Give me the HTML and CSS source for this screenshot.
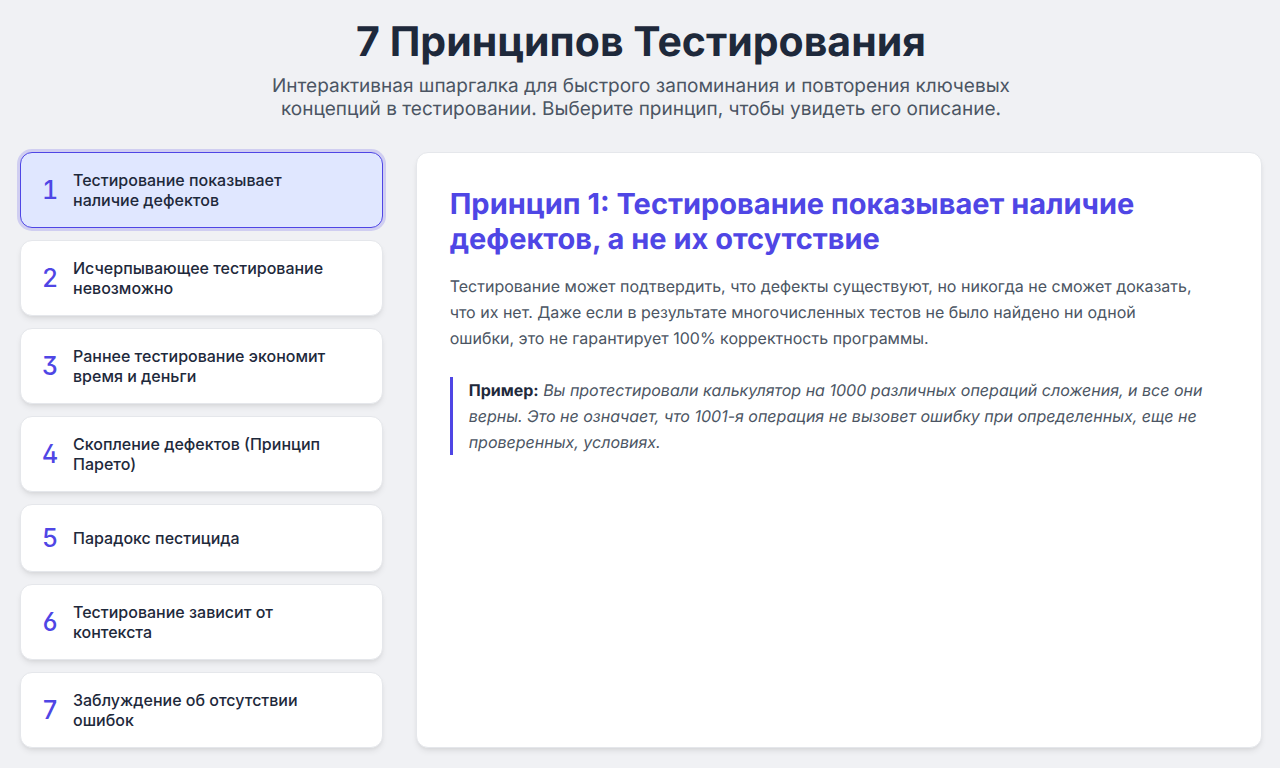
FILE: index.html
```html
<!DOCTYPE html>
<html lang="ru">
<head>
  <meta charset="UTF-8">
  <meta name="viewport" content="width=device-width, initial-scale=1.0">
  <title>7 Принципов Тестирования</title>
  <link rel="stylesheet" href="styles.css">
</head>
<body>
  <header class="header">
    <h1>7 Принципов Тестирования</h1>
    <p>Интерактивная шпаргалка для быстрого запоминания и повторения ключевых концепций в тестировании. Выберите принцип, чтобы увидеть его описание.</p>
  </header>

  <main class="layout">
    <nav class="principles" aria-label="Принципы">
      <button type="button" class="card active"><span class="number">1</span><span>Тестирование показывает наличие дефектов</span></button>
      <button type="button" class="card"><span class="number">2</span><span>Исчерпывающее тестирование невозможно</span></button>
      <button type="button" class="card"><span class="number">3</span><span>Раннее тестирование экономит время и деньги</span></button>
      <button type="button" class="card"><span class="number">4</span><span>Скопление дефектов (Принцип Парето)</span></button>
      <button type="button" class="card"><span class="number">5</span><span>Парадокс пестицида</span></button>
      <button type="button" class="card"><span class="number">6</span><span>Тестирование зависит от контекста</span></button>
      <button type="button" class="card"><span class="number">7</span><span>Заблуждение об отсутствии ошибок</span></button>
    </nav>

    <section class="details">
      <h2>Принцип 1: Тестирование показывает наличие дефектов, а не их отсутствие</h2>
      <p>Тестирование может подтвердить, что дефекты существуют, но никогда не сможет доказать, что их нет. Даже если в результате многочисленных тестов не было найдено ни одной ошибки, это не гарантирует 100% корректность программы.</p>
      <blockquote class="example"><strong>Пример:</strong> Вы протестировали калькулятор на 1000 различных операций сложения, и все они верны. Это не означает, что 1001-я операция не вызовет ошибку при определенных, еще не проверенных, условиях.</blockquote>
    </section>
  </main>
</body>
</html>
```
FILE: styles.css
```css
:root {
  --bg: #f0f1f4;
  --card: #ffffff;
  --text: #1e293b;
  --muted: #4b5563;
  --primary: #4f46e5;
  --primary-light: #e0e7ff;
  --border: #e5e7eb;
  --shadow: 0 4px 6px -1px rgba(0, 0, 0, 0.08), 0 2px 4px -2px rgba(0, 0, 0, 0.08);
}

* {
  box-sizing: border-box;
  margin: 0;
  padding: 0;
}

body {
  font-family: 'Inter', sans-serif;
  text-rendering: geometricPrecision;
  background: var(--bg);
  color: var(--text);
  min-height: 100vh;
  display: flex;
  flex-direction: column;
  padding: 16px 18px 20px 20px;
}

.header {
  text-align: center;
  margin-bottom: 32px;
}

.header h1 {
  font-size: 41px;
  line-height: 50px;
  font-weight: 700;
  margin-bottom: 8px;
}

.header p {
  max-width: 740px;
  margin: 0 auto;
  font-size: 19px;
  line-height: 23px;
  color: var(--muted);
}

.layout {
  flex: 1;
  display: grid;
  grid-template-columns: 3fr 7fr;
  gap: 33px;
}

.principles {
  display: flex;
  flex-direction: column;
  gap: 12px;
}

.card {
  display: flex;
  align-items: center;
  gap: 16px;
  padding: 17px 32px 17px 21px;
  border: 1px solid var(--border);
  border-radius: 12px;
  background: var(--card);
  box-shadow: var(--shadow);
  color: var(--text);
  font-family: inherit;
  font-size: 16px;
  font-weight: 500;
  line-height: 20px;
  text-align: left;
  cursor: pointer;
}

.card.active {
  background: var(--primary-light);
  border-color: var(--primary);
  box-shadow: 0 0 0 3px rgba(79, 70, 229, 0.2);
}

.number {
  width: 15px;
  flex-shrink: 0;
  font-size: 25px;
  line-height: 32px;
  color: var(--primary);
  font-feature-settings: 'tnum', 'cv02', 'cv03', 'cv09', 'ss02';
}

.details {
  padding: 33px;
  border: 1px solid var(--border);
  border-radius: 12px;
  background: var(--card);
  box-shadow: var(--shadow);
}

.details h2 {
  font-size: 29px;
  line-height: 35px;
  font-weight: 700;
  color: var(--primary);
  margin-bottom: 17px;
}

.details p,
.example {
  font-size: 16px;
  line-height: 26px;
  color: var(--muted);
}

.details p {
  max-width: 750px;
}

.example {
  margin-top: 26px;
  padding-left: 16px;
  border-left: 3px solid var(--primary);
  font-style: italic;
}

.example strong {
  color: var(--text);
  font-style: normal;
}
```
